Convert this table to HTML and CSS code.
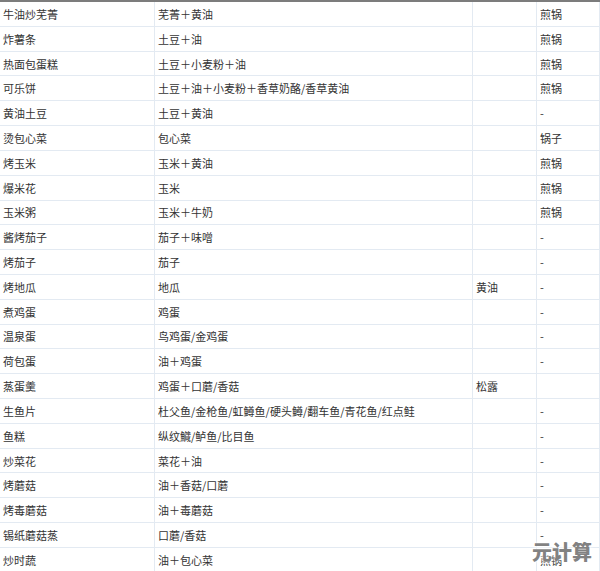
FILE: index.html
```html
<!DOCTYPE html>
<html lang="zh">
<head>
<meta charset="utf-8">
<link rel="stylesheet" href="styles.css">
</head>
<body>
<div class="page">
  <div class="table">
    <div class="c">牛油炒芜菁</div><div class="c">芜菁＋黄油</div><div class="c"></div><div class="c">煎锅</div>
    <div class="c">炸薯条</div><div class="c">土豆＋油</div><div class="c"></div><div class="c">煎锅</div>
    <div class="c">热面包蛋糕</div><div class="c">土豆＋小麦粉＋油</div><div class="c"></div><div class="c">煎锅</div>
    <div class="c">可乐饼</div><div class="c">土豆＋油＋小麦粉＋香草奶酪/香草黄油</div><div class="c"></div><div class="c">煎锅</div>
    <div class="c">黄油土豆</div><div class="c">土豆＋黄油</div><div class="c"></div><div class="c">-</div>
    <div class="c">烫包心菜</div><div class="c">包心菜</div><div class="c"></div><div class="c">锅子</div>
    <div class="c">烤玉米</div><div class="c">玉米＋黄油</div><div class="c"></div><div class="c">煎锅</div>
    <div class="c">爆米花</div><div class="c">玉米</div><div class="c"></div><div class="c">煎锅</div>
    <div class="c">玉米粥</div><div class="c">玉米＋牛奶</div><div class="c"></div><div class="c">煎锅</div>
    <div class="c">酱烤茄子</div><div class="c">茄子＋味噌</div><div class="c"></div><div class="c">-</div>
    <div class="c">烤茄子</div><div class="c">茄子</div><div class="c"></div><div class="c">-</div>
    <div class="c">烤地瓜</div><div class="c">地瓜</div><div class="c">黄油</div><div class="c">-</div>
    <div class="c">煮鸡蛋</div><div class="c">鸡蛋</div><div class="c"></div><div class="c">-</div>
    <div class="c">温泉蛋</div><div class="c">鸟鸡蛋/金鸡蛋</div><div class="c"></div><div class="c">-</div>
    <div class="c">荷包蛋</div><div class="c">油＋鸡蛋</div><div class="c"></div><div class="c">-</div>
    <div class="c">蒸蛋羹</div><div class="c">鸡蛋＋口蘑/香菇</div><div class="c">松露</div><div class="c"></div>
    <div class="c">生鱼片</div><div class="c">杜父鱼/金枪鱼/虹鳟鱼/硬头鳟/翻车鱼/青花鱼/红点鲑</div><div class="c"></div><div class="c">-</div>
    <div class="c">鱼糕</div><div class="c">纵纹鱵/鲈鱼/比目鱼</div><div class="c"></div><div class="c">-</div>
    <div class="c">炒菜花</div><div class="c">菜花＋油</div><div class="c"></div><div class="c">-</div>
    <div class="c">烤蘑菇</div><div class="c">油＋香菇/口蘑</div><div class="c"></div><div class="c">-</div>
    <div class="c">烤毒蘑菇</div><div class="c">油＋毒蘑菇</div><div class="c"></div><div class="c">-</div>
    <div class="c">锡纸蘑菇蒸</div><div class="c">口蘑/香菇</div><div class="c"></div><div class="c">-</div>
    <div class="c">炒时蔬</div><div class="c">油＋包心菜</div><div class="c"></div><div class="c">煎锅</div>
  </div>
  <div class="watermark">元计算</div>
</div>
</body>
</html>
```
FILE: styles.css
```css
html, body {
  margin: 0;
  padding: 0;
  background: #ffffff;
}
.page {
  position: relative;
  width: 600px;
  height: 571px;
  overflow: hidden;
}
.table {
  display: grid;
  grid-template-columns: 155px 318px 64px 63px;
  grid-auto-rows: 24.82px;
  border-top: 2px solid #7c7c7c;
  font-family: "Noto Sans CJK SC", "Liberation Sans", sans-serif;
  font-size: 11px;
  color: #333333;
}
.c {
  box-sizing: border-box;
  border-right: 1px solid #e3eaf2;
  border-bottom: 1px solid #e3eaf2;
  padding-left: 3px;
  display: flex;
  align-items: center;
  white-space: nowrap;
  overflow: hidden;
}
.watermark {
  position: absolute;
  left: 532px;
  top: 539px;
  font-family: "Noto Sans CJK SC", sans-serif;
  font-weight: 900;
  font-size: 20px;
  line-height: 26px;
  color: rgba(118, 118, 118, 0.92);
  text-shadow: 0 0 2px #ffffff, 0 0 4px #ffffff;
}
```
